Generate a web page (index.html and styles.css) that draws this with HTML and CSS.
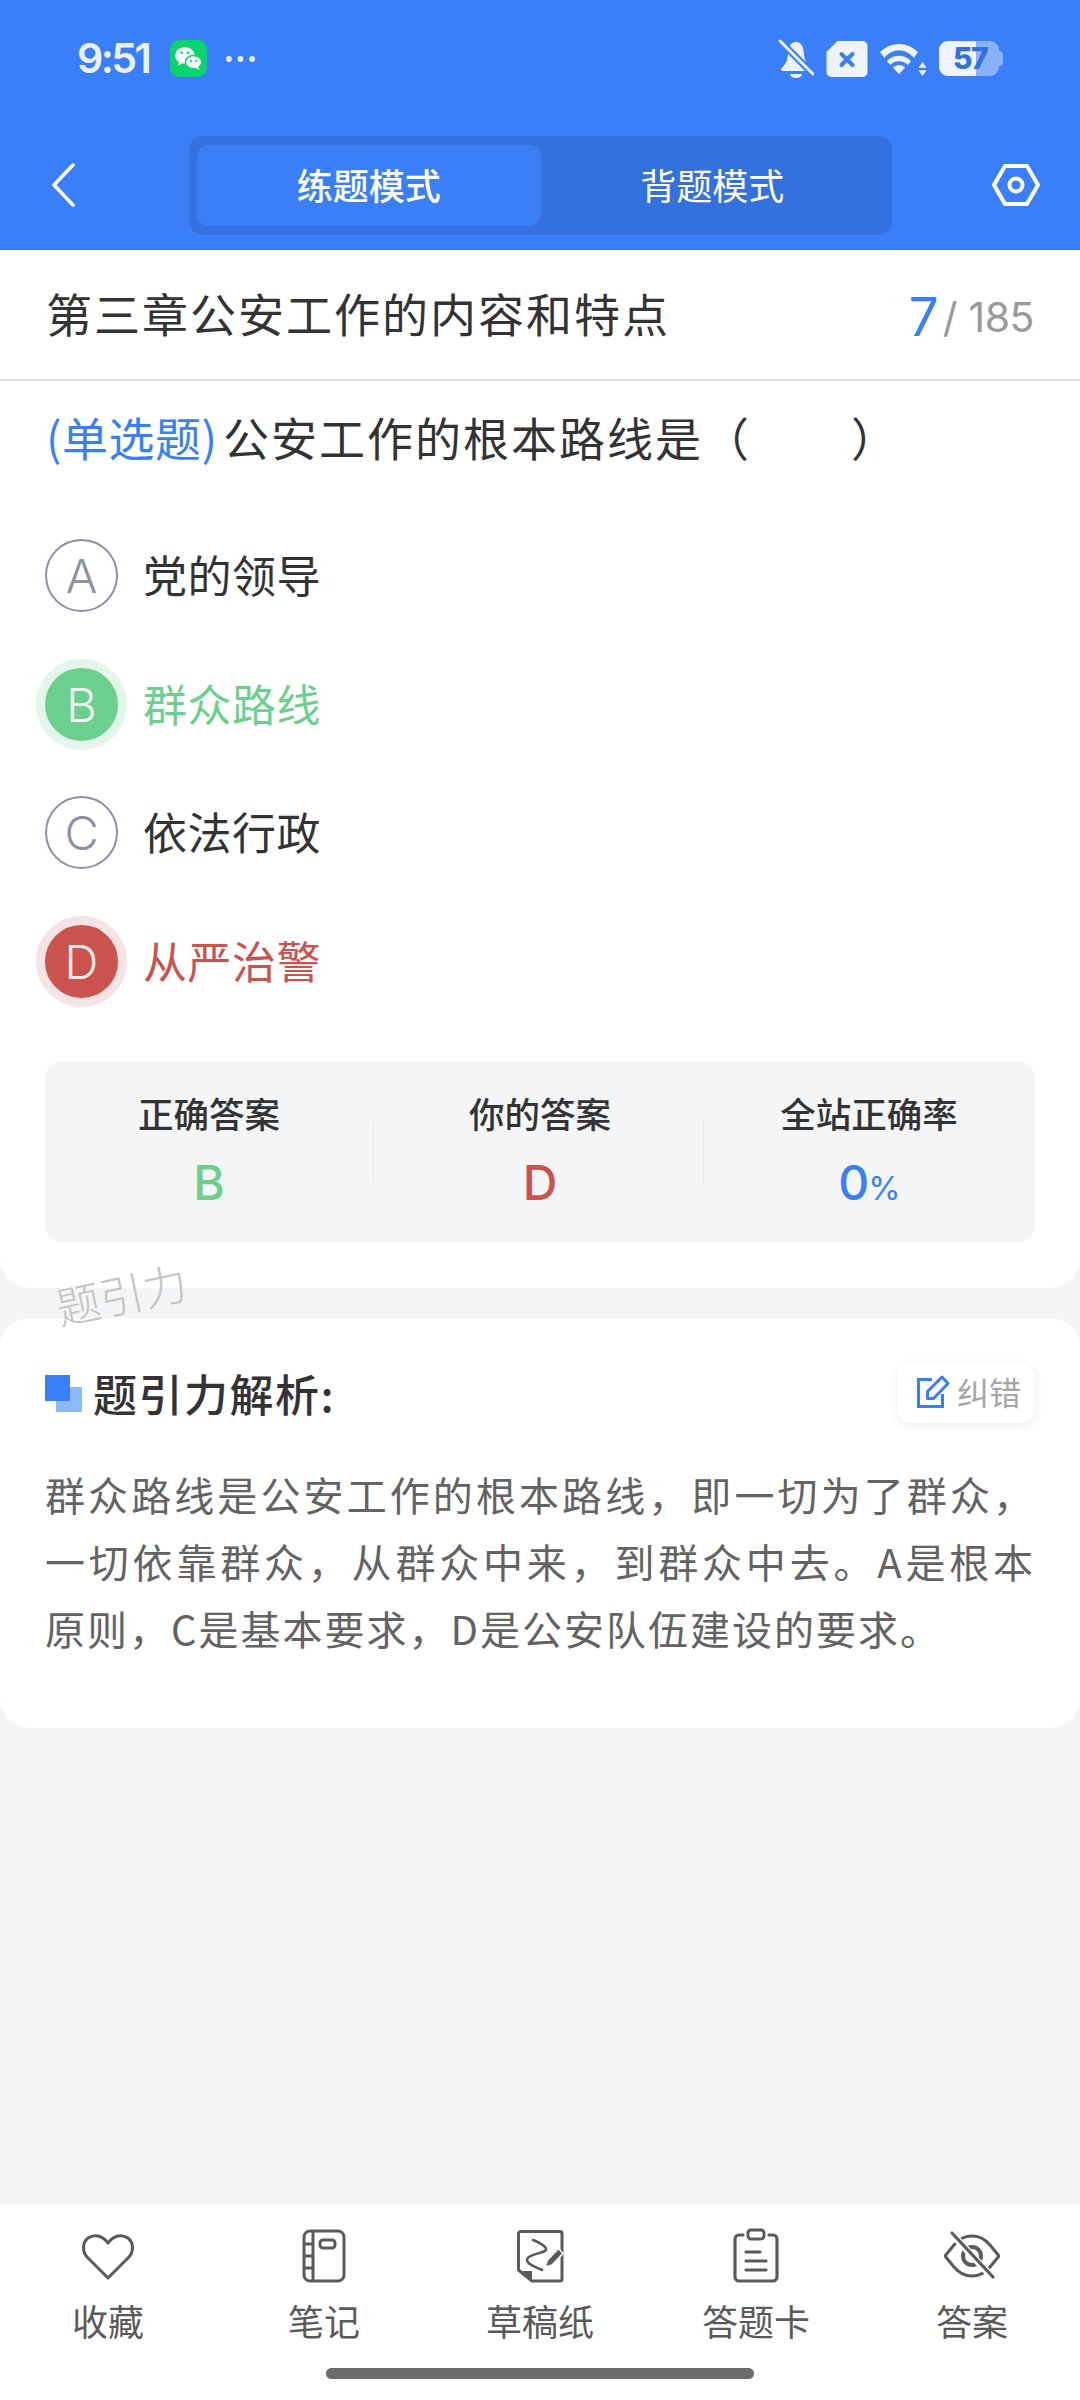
FILE: index.html
```html
<!DOCTYPE html>
<html lang="zh-CN">
<head>
<meta charset="utf-8">
<title>练题模式</title>
<link rel="stylesheet" href="styles.css">
</head>
<body>
<div class="page">
  <header class="top">
    <div class="status">
      <div class="status-left">
        <span class="time">9:51</span>
        <svg class="wechat" viewBox="0 0 36 36"><rect width="36" height="36" rx="9" fill="#0bd36b"/><ellipse cx="14.500" cy="15" rx="9.500" ry="8" fill="#fff"/><path d="M9 20l-1 5 5-3z" fill="#fff"/><ellipse cx="23" cy="21.500" rx="8" ry="6.500" fill="#fff" stroke="#0bd36b" stroke-width="1.500"/><path d="M27 26l2 3-5-2z" fill="#fff"/><circle cx="11.500" cy="12.500" r="1.300" fill="#0bd36b"/><circle cx="17.500" cy="12.500" r="1.300" fill="#0bd36b"/><circle cx="20.500" cy="20.500" r="1.100" fill="#0bd36b"/><circle cx="25.500" cy="20.500" r="1.100" fill="#0bd36b"/></svg>
        <svg class="dots" viewBox="0 0 32 8"><circle cx="4" cy="4" r="3" fill="#e6eeff"/><circle cx="16" cy="4" r="3" fill="#e6eeff"/><circle cx="28" cy="4" r="3" fill="#e6eeff"/></svg>
      </div>
      <div class="status-right">
        <svg class="st-bell" viewBox="0 0 36 40"><path d="M18 3c-3 0-6 2-7 6l-2 12c-1 4-4 6-6 9 0 2 1 2 3 2h24c2 0 3 0 3-2-2-3-5-5-6-9l-2-12c-1-4-4-6-7-6z" fill="#eef3ff"/><path d="M12 35h12c-1 3-3 4-6 4s-5-1-6-4z" fill="#eef3ff"/><path d="M0 0l35 35" stroke="#3b7ff8" stroke-width="7"/><path d="M2 2l33 33" stroke="#eef3ff" stroke-width="3" stroke-linecap="round"/></svg>
        <svg class="st-sim" viewBox="0 0 42 36"><path d="M12 0h25a5 5 0 0 1 5 5v26a5 5 0 0 1-5 5H6a5 5 0 0 1-5-5V11z" fill="#eef3ff"/><path d="M16 13l11 11M27 13L16 24" stroke="#3b7ff8" stroke-width="4" stroke-linecap="round"/></svg>
        <svg class="st-wifi" viewBox="0 0 44 35" preserveAspectRatio="none"><path d="M0 10C6 4 14 1 22 1s16 3 22 9l-5 6C34 11 28 8 22 8S10 11 5 16z" fill="#eef3ff"/><path d="M8 20c4-4 9-6 14-6s10 2 14 6l-4 4c-3-3-6-4-10-4s-7 1-10 4z" fill="#eef3ff"/><path d="M15 27c2-2 4-3 7-3s5 1 7 3l-7 7z" fill="#eef3ff"/></svg>
        <svg class="st-updown" viewBox="0 0 10 16" preserveAspectRatio="none"><path d="M5 0l4.500 6.500H.5zM5 16L.5 9.500h9z" fill="#eef3ff"/></svg>
        <div class="battery">
          <div class="bat-body"><div class="bat-fill"></div><span class="bat-num">57</span></div>
          <div class="bat-cap"></div>
        </div>
      </div>
    </div>
    <nav class="bar">
      <svg class="back" viewBox="0 0 24 44"><path d="M22 2L3 22l19 20" fill="none" stroke="#fff" stroke-width="3.500" stroke-linecap="round" stroke-linejoin="round"/></svg>
      <div class="tabs">
        <div class="tab tab-on">练题模式</div>
        <div class="tab">背题模式</div>
      </div>
      <svg class="hex" viewBox="0 0 48 44"><path d="M13 3h22l11 19-11 19H13L2 22z" fill="none" stroke="#fff" stroke-width="4" stroke-linejoin="round"/><circle cx="24" cy="22" r="6.500" fill="none" stroke="#fff" stroke-width="4"/></svg>
    </nav>
  </header>

  <section class="card card-q">
    <div class="chapter">
      <h1 class="chapter-name">第三章公安工作的内容和特点</h1>
      <div class="count"><span class="count-now">7</span><span class="count-slash">/</span><span class="count-total">185</span></div>
    </div>
    <div class="question"><span class="q-type">(单选题)</span>公安工作的根本路线是（<span class="blank">　　</span>）</div>
    <ul class="options">
      <li class="option"><span class="mark">A</span><span class="opt-text">党的领导</span></li>
      <li class="option opt-right"><span class="mark">B</span><span class="opt-text">群众路线</span></li>
      <li class="option"><span class="mark">C</span><span class="opt-text">依法行政</span></li>
      <li class="option opt-wrong"><span class="mark">D</span><span class="opt-text">从严治警</span></li>
    </ul>
    <div class="stats">
      <div class="stat"><div class="stat-label">正确答案</div><div class="stat-val val-right">B</div></div>
      <div class="stat stat-mid"><div class="stat-label">你的答案</div><div class="stat-val val-wrong">D</div></div>
      <div class="stat"><div class="stat-label">全站正确率</div><div class="stat-val val-rate">0<small class="pct">%</small></div></div>
    </div>
  </section>

  <div class="watermark">题引力</div>

  <section class="card card-a">
    <div class="a-head">
      <div class="a-title"><span class="squares"><i class="sq-light"></i><i class="sq-dark"></i></span><h2 class="a-name">题引力解析:</h2></div>
      <div class="fix">
        <svg class="fix-ic" viewBox="0 0 33 33"><path d="M15 4.500H1.500v27h24V19" fill="none" stroke="#3b7ff8" stroke-width="3"/><path d="M10.500 23.500v-7L25 2l6 6.500-14.500 15z" fill="none" stroke="#3b7ff8" stroke-width="3" stroke-linejoin="round"/></svg>
        <span>纠错</span>
      </div>
    </div>
    <p class="a-text">群众路线是公安工作的根本路线，即一切为了群众，一切依靠群众，从群众中来，到群众中去。A是根本原则，C是基本要求，D是公安队伍建设的要求。</p>
  </section>

  <div class="spacer"></div>

  <footer class="bottom">
    <div class="tools">
      <div class="tool">
        <svg class="tool-ic" viewBox="0 0 56 56"><path d="M28 50L8 30C2 24 2 15 8 10c6-4 14-3 20 5 6-8 14-9 20-5 6 5 6 14 0 20z" fill="none" stroke="#5a5a5a" stroke-width="3" stroke-linejoin="round"/></svg>
        <span>收藏</span>
      </div>
      <div class="tool">
        <svg class="tool-ic" viewBox="0 0 56 56"><rect x="8" y="3" width="40" height="50" rx="6" fill="none" stroke="#5a5a5a" stroke-width="3"/><path d="M17 3v50M8 16h9M8 28h9M8 40h9" stroke="#5a5a5a" stroke-width="3"/><rect x="24" y="12" width="15" height="8" rx="3" fill="none" stroke="#5a5a5a" stroke-width="3"/></svg>
        <span>笔记</span>
      </div>
      <div class="tool">
        <svg class="tool-ic" viewBox="0 0 56 56"><path d="M8 3.500h40a2 2 0 0 1 2 2V51a2 2 0 0 1-2 2H20L6.500 42V5z" fill="none" stroke="#5a5a5a" stroke-width="3" stroke-linejoin="round"/><path d="M10 43h10v10z" fill="#5a5a5a"/><path d="M21 12c6 2 14 7 13 10-1 3-19 4-19 10 0 4 8 7 15 10" fill="none" stroke="#5a5a5a" stroke-width="2.500" stroke-linecap="round"/><path d="M33 39l2.500-7 11-11.500 4.500 5L40 37z" fill="#5a5a5a" stroke="#fff" stroke-width="1.500"/></svg>
        <span>草稿纸</span>
      </div>
      <div class="tool">
        <svg class="tool-ic" viewBox="0 0 56 56"><path d="M15 7h-4a4 4 0 0 0-4 4v38a4 4 0 0 0 4 4h34a4 4 0 0 0 4-4V11a4 4 0 0 0-4-4h-4" fill="none" stroke="#5a5a5a" stroke-width="3.200" stroke-linecap="round"/><rect x="20" y="2" width="16" height="9" rx="3" fill="none" stroke="#5a5a5a" stroke-width="3"/><path d="M18 24h14M18 33h20M18 42h20" stroke="#5a5a5a" stroke-width="3.200" stroke-linecap="round"/></svg>
        <span>答题卡</span>
      </div>
      <div class="tool">
        <svg class="tool-ic" viewBox="0 0 56 56"><path d="M1 28L10 17C15 11 21 8 28 8s13 3 18 9l9 11-9 11c-5 6-11 9-18 9s-13-3-18-9z" fill="none" stroke="#5a5a5a" stroke-width="3" stroke-linejoin="round"/><circle cx="28" cy="28" r="9" fill="none" stroke="#5a5a5a" stroke-width="4"/><path d="M8 6l41 44" stroke="#fff" stroke-width="7"/><path d="M8 5l41 44" stroke="#5a5a5a" stroke-width="3.200" stroke-linecap="round"/></svg>
        <span>答案</span>
      </div>
    </div>
    <div class="home"></div>
  </footer>
</div>
</body>
</html>
```

FILE: styles.css
```css
* { box-sizing: border-box; }
html, body { margin: 0; padding: 0; }
body { font-family: "Noto Sans CJK SC", "Noto Sans", sans-serif; background: #f4f5f7; }
.page { width: 1080px; height: 2400px; display: flex; flex-direction: column; position: relative; overflow: hidden; background: #f4f5f7; }

.top { height: 250px; background: #3b7ff8; display: flex; flex-direction: column; flex: none; }
.status { height: 118px; padding: 40px 77px 0 77px; display: flex; justify-content: space-between; align-items: flex-start; }
.status-left { display: flex; align-items: center; height: 37px; }
.time { font-family: Inter, sans-serif; font-weight: 600; font-size: 41px; line-height: 37px; color: #eaf0ff; letter-spacing: -2.500px; }
.wechat { width: 37px; height: 37px; margin-left: 21px; }
.dots { width: 31px; height: 8px; margin-left: 18px; }
.status-right { display: flex; align-items: center; height: 37px; }
.st-bell { width: 36px; height: 40px; }
.st-sim { width: 43px; height: 36px; margin-left: 11px; }
.st-wifi { width: 38px; height: 32px; margin-left: 12px; }
.st-updown { width: 9px; height: 14px; margin-top: 21px; }
.battery { display: flex; align-items: center; margin-left: 12px; }
.bat-body { position: relative; width: 60px; height: 35px; border-radius: 9px; background: #8ab2fb; overflow: hidden; }
.bat-fill { width: 37px; height: 35px; background: #eef3ff; }
.bat-num { position: absolute; left: 14px; top: 0; font-family: Inter, sans-serif; font-weight: 800; font-size: 30px; line-height: 35px; letter-spacing: -1.500px; color: #3270dc; }
.bat-cap { width: 4px; height: 15px; border-radius: 0 4px 4px 0; background: #8ab2fb; }

.bar { height: 132px; padding: 18px 40px 0 51px; display: flex; align-items: flex-start; }
.back { width: 24px; height: 44px; margin-top: 27px; flex: none; }
.tabs { width: 703px; height: 99px; margin-left: 114px; padding: 9px 8px; background: #3471df; border-radius: 14px; display: flex; flex: none; }
.tab { width: 344px; height: 81px; border-radius: 12px; display: flex; align-items: center; justify-content: center; padding-bottom: 4px; font-size: 36px; color: #fff; }
.tab-on { background: #3b7ff8; font-weight: 500; }
.hex { width: 48px; height: 44px; margin: 27px 0 0 auto; flex: none; }

.card { background: #fff; flex: none; }
.card-q { height: 1038px; border-radius: 0 0 30px 30px; padding: 0 45px; margin: 0 0 30px; }
.chapter { height: 131px; margin: 0 -45px; padding: 0 46px 5px 46px; border-bottom: 2px solid #e2e3e5; display: flex; justify-content: space-between; align-items: center; }
.chapter-name { margin: 0; font-size: 46px; font-weight: 400; color: #333; letter-spacing: 2px; }
.count { white-space: nowrap; margin-top: 9px; }
.count-now { font-family: Inter, sans-serif; font-size: 53px; color: #3b7ff8; vertical-align: -4px; }
.count-slash { font-family: Inter, sans-serif; font-size: 41px; color: #999; margin: 0 11px 0 4px; }
.count-total { font-family: Inter, sans-serif; font-size: 41px; color: #999; letter-spacing: -0.500px; }
.question { height: 130px; padding-top: 19px; font-size: 46px; line-height: 72px; color: #333; letter-spacing: 2px; margin-left: 1px; white-space: nowrap; }
.q-type { color: #3b7ff8; letter-spacing: 0.500px; margin-right: 5.500px; }
.blank { letter-spacing: 4px; }
.options { list-style: none; margin: 0; padding: 0; }
.option { height: 128.800px; display: flex; align-items: center; font-size: 44px; color: #333; }
.mark { width: 73px; height: 73px; border-radius: 50%; border: 2px solid #8d8fa3; color: #8d8fa3; display: flex; align-items: center; justify-content: center; font-family: Inter, sans-serif; font-weight: 300; font-size: 47px; flex: none; }
.opt-text { margin-left: 25px; padding-bottom: 3px; letter-spacing: 0.500px; }
.opt-right { color: #6dcf8e; }
.opt-right .mark { background: #6dcf8e; border-color: #6dcf8e; color: #effaf3; box-shadow: 0 0 0 9px #e3f6eb; }
.opt-wrong { color: #cb534e; }
.opt-wrong .mark { background: #cb534e; border-color: #cb534e; color: #fbeceb; box-shadow: 0 0 0 9px #f6e3e3; }
.stats { height: 181px; margin-top: 35px; background: #f4f5f7; border-radius: 18px; display: grid; grid-template-columns: 328px 330px 332px; position: relative; }
.stat { position: relative; display: flex; flex-direction: column; align-items: center; padding-top: 28px; }
.stat-mid { padding-left: 4px; }
.stat + .stat::before { content: ""; position: absolute; left: 0; top: 61px; height: 61px; width: 1px; background: #e9eaed; }
.stat-label { font-size: 35.500px; font-weight: 500; line-height: 48px; color: #333; }
.stat-val { font-family: Inter, sans-serif; font-size: 48px; font-weight: 500; line-height: 62px; margin-top: 15px; }
.val-right { color: #6dcf8e; }
.val-wrong { color: #cb534e; }
.val-rate { color: #3b7ff8; letter-spacing: -1px; }
.pct { font-size: 33px; font-weight: 400; }

.watermark { position: absolute; left: 55px; top: 1263px; font-size: 44px; line-height: 60px; font-weight: 300; color: #c3c3c3; transform: rotate(-12deg); z-index: 5; }

.card-a { height: 410px; border-radius: 30px; padding: 0 45px; }
.a-head { height: 105px; padding-top: 45px; display: flex; justify-content: space-between; align-items: flex-start; }
.a-title { display: flex; align-items: center; height: 60px; }
.squares { position: relative; width: 37px; height: 37px; flex: none; }
.sq-dark { position: absolute; left: 0; top: 0; width: 25px; height: 26px; background: #3b7ff8; }
.sq-light { position: absolute; left: 11px; top: 12px; width: 26px; height: 25px; background: #8db9fc; }
.a-name { margin: 0 0 0 11px; font-size: 44px; font-weight: 500; color: #333; letter-spacing: 1.500px; }
.fix { width: 138px; height: 60px; border-radius: 14px; background: #fff; box-shadow: 0 2px 10px rgba(0,0,0,.08); display: flex; align-items: center; padding: 0 0 4px 20px; font-size: 32px; color: #a5a5a5; }
.fix-ic { width: 33px; height: 33px; margin-right: 7px; flex: none; }
.a-text { margin: 38px 0 0; font-size: 40px; line-height: 67px; color: #636363; letter-spacing: 2px; text-align: justify; }

.spacer { flex: 1; }
.bottom { height: 196px; background: #fff; flex: none; position: relative; }
.tools { display: grid; grid-template-columns: repeat(5, 216px); padding-top: 24px; }
.tool { display: flex; flex-direction: column; align-items: center; font-size: 36px; line-height: 48px; color: #5a5a5a; }
.tool-ic { width: 56px; height: 56px; margin-bottom: 12px; }
.home { position: absolute; left: 326px; top: 164px; width: 428px; height: 11px; border-radius: 6px; background: #6b6b6b; }
```
